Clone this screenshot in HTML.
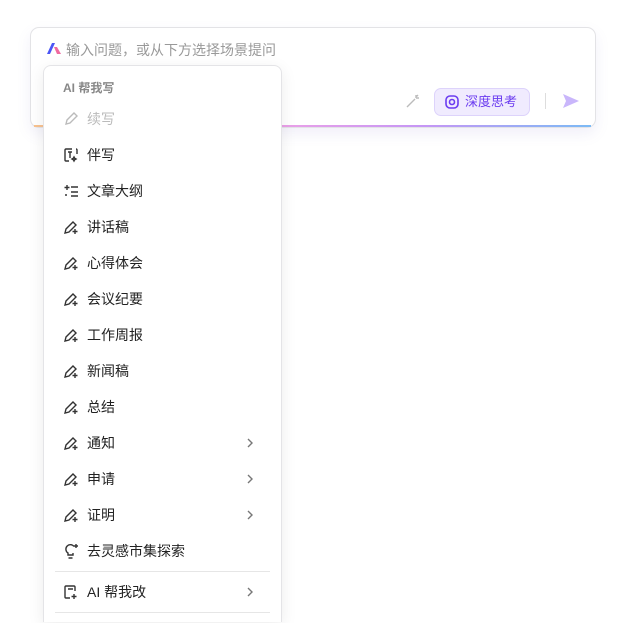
<!DOCTYPE html>
<html><head><meta charset="utf-8"><style>
html,body{margin:0;width:620px;height:623px;overflow:hidden}
body{background:#fff;font-family:"Liberation Sans","Noto Sans CJK SC",sans-serif;position:relative}
.box{position:absolute;left:30px;top:27px;width:564px;height:99px;border:1px solid #e3e3e6;border-radius:9px;background:#fff;box-shadow:0 6px 14px rgba(120,110,200,.10)}
.grad{position:absolute;left:34px;top:125px;width:557px;height:2px;background:linear-gradient(90deg,#f8c38f,#e9a0e8 45%,#c596f5 70%,#7cbaf5)}
.ph{position:absolute;left:66px;top:40px;font-size:14px;color:#999}
.menu{position:absolute;left:43px;top:65px;width:237px;height:556px;border:1px solid #e4e4e7;border-bottom:none;border-radius:8px 8px 0 0;background:#fff;box-shadow:0 4px 16px rgba(0,0,0,.08)}
.it{position:absolute;left:44px;width:236px;height:36px;font-size:14px;color:#222;line-height:36px}
.it span{position:absolute;left:43px}
.it svg{position:absolute;left:19px;top:10px}
.it svg.chev{left:201px;top:12px}
.hd{position:absolute;left:63px;top:79px;font-size:12px;color:#888;font-weight:bold}
.div{position:absolute;left:55px;width:215px;height:1px;background:#e6e6e6}
.dt{position:absolute;left:434px;top:88px;width:94px;height:26px;border:1px solid #ddd3fb;background:#f0ebfe;border-radius:7px;color:#6b3cf0;font-size:13px;line-height:26px}
</style></head><body>
<div class="box"></div><div class="grad"></div>
<svg style="position:absolute;left:46px;top:42px" width="16" height="13" viewBox="0 0 16 13"><path d="M1 12L6 1h3L4 12z" fill="#4a55f5"/><path d="M8 5l3 7h4l-4-7z" fill="#f06aa0"/></svg>
<div class="ph">输入问题，或从下方选择场景提问</div>
<svg style="position:absolute;left:405px;top:93px" width="16" height="16" viewBox="0 0 16 16" fill="none" stroke="#bbb" stroke-width="1.4"><path d="M2 14l8-8M11 2v3M14 5h-3M13 2l-1.5 1.5"/></svg>
<div class="dt"><svg style="position:absolute;left:9px;top:5px" width="16" height="16" viewBox="0 0 16 16" fill="none" stroke="#6b3cf0" stroke-width="1.6"><rect x="2" y="2" width="12" height="12" rx="4"/><circle cx="8" cy="8" r="2.5"/></svg><span style="position:absolute;left:30px">深度思考</span></div>
<div style="position:absolute;left:545px;top:93px;width:1px;height:16px;background:#ddd"></div>
<svg style="position:absolute;left:562px;top:93px" width="18" height="16" viewBox="0 0 18 16"><path d="M1 1l16 7-16 7 3-7z" fill="#c9b6fb"/></svg>
<div class="menu"></div>
<div class="hd">AI 帮我写</div>
<div class="it" style="top:101px;color:#bbb"><svg width="16" height="16" viewBox="0 0 16 16" fill="none" stroke="#bbb" stroke-width="1.4"><path d="M3 13l1-4 7-7 3 3-7 7z"/></svg><span>续写</span></div>
<div class="it" style="top:137px"><svg width="16" height="16" viewBox="0 0 16 16" fill="none" stroke="#333" stroke-width="1.4"><path d="M9 2H3a1 1 0 00-1 1v10a1 1 0 001 1h3M14 7V3a1 1 0 00-1-1M5 5h4M7 5v6M11 10l.7 1.3L13 12l-1.3.7L11 14l-.7-1.3L9 12l1.3-.7z"/></svg><span>伴写</span></div>
<div class="it" style="top:173px"><svg width="16" height="16" viewBox="0 0 16 16" fill="none" stroke="#333" stroke-width="1.4"><path d="M4 2v5M1.5 4.5h5M8 4h7M8 9h7M2 12h2M8 13h7"/></svg><span>文章大纲</span></div>
<div class="it" style="top:209px"><svg width="16" height="16" viewBox="0 0 16 16" fill="none" stroke="#333" stroke-width="1.4"><path d="M2 14l1-4 7-7 3 3-7 7zM12 10v5M9.5 12.5h5"/></svg><span>讲话稿</span></div>
<div class="it" style="top:245px"><svg width="16" height="16" viewBox="0 0 16 16" fill="none" stroke="#333" stroke-width="1.4"><path d="M2 14l1-4 7-7 3 3-7 7zM12 10v5M9.5 12.5h5"/></svg><span>心得体会</span></div>
<div class="it" style="top:281px"><svg width="16" height="16" viewBox="0 0 16 16" fill="none" stroke="#333" stroke-width="1.4"><path d="M2 14l1-4 7-7 3 3-7 7zM12 10v5M9.5 12.5h5"/></svg><span>会议纪要</span></div>
<div class="it" style="top:317px"><svg width="16" height="16" viewBox="0 0 16 16" fill="none" stroke="#333" stroke-width="1.4"><path d="M2 14l1-4 7-7 3 3-7 7zM12 10v5M9.5 12.5h5"/></svg><span>工作周报</span></div>
<div class="it" style="top:353px"><svg width="16" height="16" viewBox="0 0 16 16" fill="none" stroke="#333" stroke-width="1.4"><path d="M2 14l1-4 7-7 3 3-7 7zM12 10v5M9.5 12.5h5"/></svg><span>新闻稿</span></div>
<div class="it" style="top:389px"><svg width="16" height="16" viewBox="0 0 16 16" fill="none" stroke="#333" stroke-width="1.4"><path d="M2 14l1-4 7-7 3 3-7 7zM12 10v5M9.5 12.5h5"/></svg><span>总结</span></div>
<div class="it" style="top:425px"><svg width="16" height="16" viewBox="0 0 16 16" fill="none" stroke="#333" stroke-width="1.4"><path d="M2 14l1-4 7-7 3 3-7 7zM12 10v5M9.5 12.5h5"/></svg><span>通知</span><svg class="chev" width="10" height="12" viewBox="0 0 10 12" fill="none" stroke="#777" stroke-width="1.4"><path d="M3 2l4 4-4 4"/></svg></div>
<div class="it" style="top:461px"><svg width="16" height="16" viewBox="0 0 16 16" fill="none" stroke="#333" stroke-width="1.4"><path d="M2 14l1-4 7-7 3 3-7 7zM12 10v5M9.5 12.5h5"/></svg><span>申请</span><svg class="chev" width="10" height="12" viewBox="0 0 10 12" fill="none" stroke="#777" stroke-width="1.4"><path d="M3 2l4 4-4 4"/></svg></div>
<div class="it" style="top:497px"><svg width="16" height="16" viewBox="0 0 16 16" fill="none" stroke="#333" stroke-width="1.4"><path d="M2 14l1-4 7-7 3 3-7 7zM12 10v5M9.5 12.5h5"/></svg><span>证明</span><svg class="chev" width="10" height="12" viewBox="0 0 10 12" fill="none" stroke="#777" stroke-width="1.4"><path d="M3 2l4 4-4 4"/></svg></div>
<div class="it" style="top:533px"><svg width="16" height="16" viewBox="0 0 16 16" fill="none" stroke="#333" stroke-width="1.4"><path d="M11 3.5A4.5 4.5 0 105 10v2h5v-2M5.5 15h4M13 1v4M11 3h4"/></svg><span>去灵感市集探索</span></div>
<div class="div" style="top:571px"></div>
<div class="it" style="top:574px"><svg width="16" height="16" viewBox="0 0 16 16" fill="none" stroke="#333" stroke-width="1.4"><path d="M12 7V3a1 1 0 00-1-1H3a1 1 0 00-1 1v10a1 1 0 001 1h4M5 5h5M11 10v5M8.5 12.5h5"/></svg><span>AI 帮我改</span><svg class="chev" width="10" height="12" viewBox="0 0 10 12" fill="none" stroke="#777" stroke-width="1.4"><path d="M3 2l4 4-4 4"/></svg></div>
<div class="div" style="top:612px"></div>
</body></html>
